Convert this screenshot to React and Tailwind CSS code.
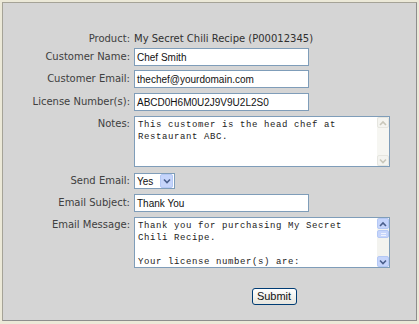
import React from "react";

const LABEL = "w-[127px] shrink-0 text-right text-[10px] text-[#404040] leading-[12px] pr-0";
const LFONT = { fontFamily: '"DejaVu Sans", Verdana, sans-serif' };
const SANS = { fontFamily: '"Liberation Sans", Arial, sans-serif' };
const MONO = { fontFamily: '"Liberation Mono", "Courier New", monospace' };

function Chevron({ up, color }) {
  return (
    <svg width="8" height="6" viewBox="0 0 8 6">
      <path
        d={up ? "M1 5 L4 2 L7 5" : "M1 1.5 L4 4.5 L7 1.5"}
        fill="none"
        stroke={color}
        strokeWidth="1.6"
      />
    </svg>
  );
}

function Input({ value }) {
  return (
    <div
      className="w-[175px] h-[18px] border border-[#7f9db9] bg-white flex items-center pl-[2px] text-[10px] text-[#111]"
      style={SANS}
    >
      {value}
    </div>
  );
}

function TextArea({ lines, enabled }) {
  return (
    <div className="w-[256px] h-[51px] border border-[#7f9db9] bg-white flex">
      <div
        className="flex-1 pl-[3px] pt-[2px] text-[9px] tracking-[0.6px] leading-[12px] text-[#222] whitespace-pre overflow-hidden"
        style={MONO}
      >
        {lines.join("\n")}
      </div>
      {enabled ? (
        <div className="w-[12px] flex flex-col bg-[#f3f3ef]">
          <div className="h-[11px] bg-[#c6d5fb] border border-[#b4c8f5] rounded-[2px] flex items-center justify-center">
            <Chevron up color="#4a5f8c" />
          </div>
          <div className="h-[8px] mt-[1px] bg-[#c6d5fb] border border-[#b4c8f5] rounded-[2px] flex flex-col items-center justify-center gap-[1px]">
            <div className="w-[5px] h-px bg-[#eef2fe]" />
            <div className="w-[5px] h-px bg-[#eef2fe]" />
          </div>
          <div className="flex-1" />
          <div className="h-[11px] bg-[#c6d5fb] border border-[#b4c8f5] rounded-[2px] flex items-center justify-center">
            <Chevron color="#4a5f8c" />
          </div>
        </div>
      ) : (
        <div className="w-[12px] flex flex-col bg-[#f6f6f2]">
          <div className="h-[11px] bg-[#f4f4f0] border border-[#e6e6e0] rounded-[2px] flex items-center justify-center">
            <Chevron up color="#c9c7ba" />
          </div>
          <div className="flex-1" />
          <div className="h-[11px] bg-[#f4f4f0] border border-[#e6e6e0] rounded-[2px] flex items-center justify-center">
            <Chevron color="#c9c7ba" />
          </div>
        </div>
      )}
    </div>
  );
}

function Row({ label, children, top, className = "" }) {
  return (
    <div className={`flex ${top ? "items-start" : "items-center"} ${className}`}>
      <div className={`${LABEL} ${top ? "pt-[2px]" : ""}`} style={LFONT}>
        {label}
      </div>
      <div className="ml-[4px]">{children}</div>
    </div>
  );
}

export default function App() {
  return (
    <div className="w-[419px] h-[324px] bg-[#ece9d8] pt-[2px] pl-[2px]">
      <div className="w-[415px] h-[319px] border border-[#a5a397] border-r-[#8d8d8d] border-b-[#8d8d8d] bg-[#d5d5d5] flex flex-col">
        <Row label="Product:" className="mt-[27px] h-[18px]">
          <div className="text-[10px] text-[#303030] leading-[12px]" style={LFONT}>
            My Secret Chili Recipe (P00012345)
          </div>
        </Row>
        <Row label="Customer Name:">
          <Input value="Chef Smith" />
        </Row>
        <Row label="Customer Email:" className="mt-[4px]">
          <Input value="thechef@yourdomain.com" />
        </Row>
        <Row label="License Number(s):" className="mt-[5px]">
          <Input value="ABCD0H6M0U2J9V9U2L2S0" />
        </Row>
        <Row label="Notes:" top className="mt-[5px]">
          <TextArea lines={["This customer is the head chef at", "Restaurant ABC."]} />
        </Row>
        <Row label="Send Email:" className="mt-[6px]">
          <div className="w-[41px] h-[16px] border border-[#7f9db9] bg-white flex items-center">
            <div className="flex-1 pl-[2px] text-[10px] text-[#111]" style={SANS}>
              Yes
            </div>
            <div className="w-[13px] h-[14px] mr-px bg-[#c6d5fb] border border-[#b4c8f5] rounded-[2px] flex items-center justify-center">
              <Chevron color="#4a5f8c" />
            </div>
          </div>
        </Row>
        <Row label="Email Subject:" className="mt-[5px]">
          <Input value="Thank You" />
        </Row>
        <Row label="Email Message:" top className="mt-[5px]">
          <TextArea
            enabled
            lines={[
              "Thank you for purchasing My Secret",
              "Chili Recipe.",
              "",
              "Your license number(s) are:",
            ]}
          />
        </Row>
        <div className="flex mt-[20px]">
          <div className="w-[131px] shrink-0" />
          <div className="flex-1 flex justify-center pr-[2px]">
            <div
              className="w-[45px] h-[17px] border border-[#003c74] rounded-[3px] bg-gradient-to-b from-white to-[#e6e5de] flex items-center justify-center text-[11px] text-[#111]"
              style={SANS}
            >
              Submit
            </div>
          </div>
        </div>
      </div>
    </div>
  );
}
